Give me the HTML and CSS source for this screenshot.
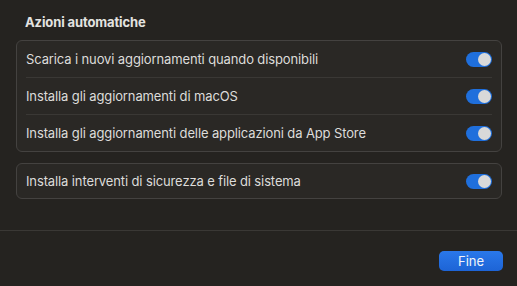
FILE: index.html
```html
<!DOCTYPE html>
<html lang="it">
<head>
  <meta charset="UTF-8" />
  <title>Azioni automatiche</title>
  <link rel="stylesheet" href="styles.css">
</head>
<body>
  <div class="sheet">
    <div class="content">
      <h2 class="title">Azioni automatiche</h2>
      <div class="group">
        <div class="row">
          <span>Scarica i nuovi aggiornamenti quando disponibili</span>
          <span class="toggle"></span>
        </div>
        <div class="row">
          <span>Installa gli aggiornamenti di macOS</span>
          <span class="toggle"></span>
        </div>
        <div class="row">
          <span>Installa gli aggiornamenti delle applicazioni da App Store</span>
          <span class="toggle"></span>
        </div>
      </div>
      <div class="group">
        <div class="row">
          <span>Installa interventi di sicurezza e file di sistema</span>
          <span class="toggle"></span>
        </div>
      </div>
    </div>
    <div class="footer">
      <button class="done">Fine</button>
    </div>
  </div>
</body>
</html>
```

FILE: styles.css
```css
html, body {
  margin: 0;
  height: 100%;
}
body {
  font-family: Inter, "Liberation Sans", sans-serif;
  font-size: 13px;
  letter-spacing: -0.12px;
  color: #dddcda;
  background-color: #252320;
}
.sheet {
  display: flex;
  flex-direction: column;
  height: 286px;
}
.content {
  padding: 0 15px 0 16px;
  height: 231px;
  box-sizing: border-box;
  border-bottom: 1px solid #3a3835;
}
.title {
  margin: 0;
  padding: 14px 0 0 9px;
  height: 40px;
  box-sizing: border-box;
  line-height: 16px;
  font-size: 13px;
  font-weight: 700;
  color: #e4e3e1;
}
.group {
  background-color: #2a2825;
  border: 1px solid #444240;
  border-radius: 6px;
  padding: 0 9px;
  margin-bottom: 11px;
}
.row {
  display: flex;
  justify-content: space-between;
  align-items: center;
  height: 37px;
  box-sizing: border-box;
  border-bottom: 1px solid #3a3835;
}
.row:last-child {
  border-bottom: none;
  height: 34px;
}
.group:first-of-type .row:last-child {
  height: 36px;
}
.toggle {
  position: relative;
  width: 26px;
  height: 15px;
  border-radius: 8px;
  background-color: #1f6fdc;
}
.toggle::after {
  content: "";
  position: absolute;
  right: 1px;
  top: 1px;
  width: 13px;
  height: 13px;
  border-radius: 50%;
  background-color: #d9d9d9;
}
.footer {
  display: flex;
  justify-content: flex-end;
  padding: 20px 14px 0 0;
}
.done {
  width: 64px;
  height: 20px;
  border: none;
  border-radius: 5px;
  background: linear-gradient(#2a78ea, #1d64d6);
  color: #f2f4f8;
  font-family: Inter, "Liberation Sans", sans-serif;
  font-size: 13px;
  padding: 0;
}
```
